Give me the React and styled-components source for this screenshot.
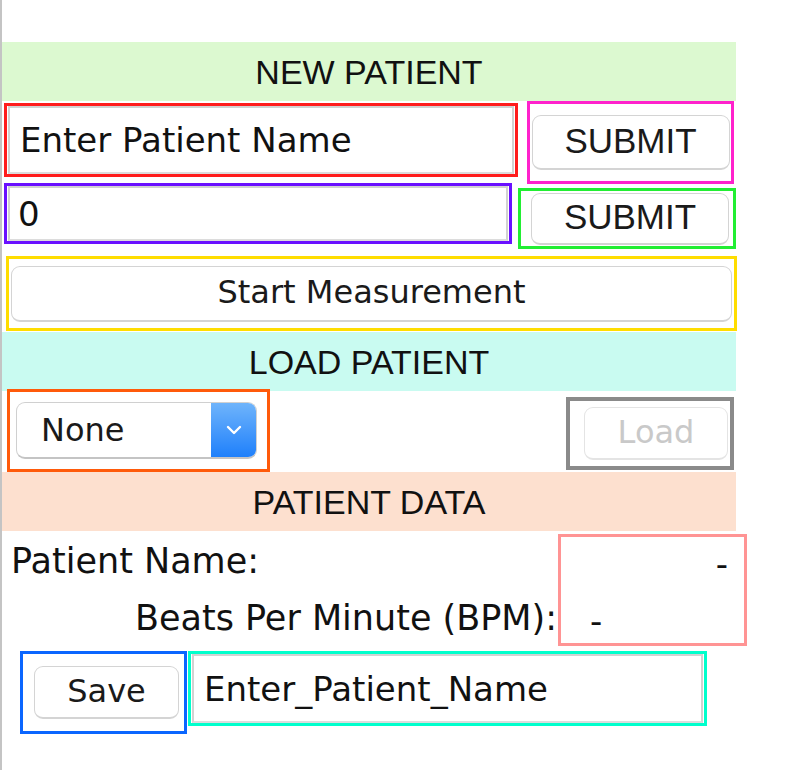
import styled, { createGlobalStyle } from "styled-components";

const GlobalStyle = createGlobalStyle`
  html, body {
    margin: 0;
    padding: 0;
    background: #ffffff;
  }
  * {
    box-sizing: border-box;
  }
`;

const Frame = styled.div`
  width: 798px;
  min-height: 770px;
  border-left: 2px solid #c4c4c4;
  padding-top: 42px;
  font-family: "DejaVu Sans", "Liberation Sans", sans-serif;
  color: #111;
  overflow: hidden;
`;

const Panel = styled.div`
  width: 734px;
  display: flex;
  flex-direction: column;
`;

const Band = styled.div`
  height: 59px;
  background: ${(p) => p.$bg};
  display: flex;
  align-items: center;
  justify-content: center;
  font-family: "Liberation Sans", Arial, sans-serif;
  font-size: 34px;
  color: #111;
  padding-top: 2px;
`;

const Row = styled.div`
  height: ${(p) => p.$h}px;
  display: flex;
  align-items: flex-start;
`;

const Outline = styled.div`
  flex: none;
  width: ${(p) => p.$w}px;
  height: ${(p) => p.$h}px;
  margin-left: ${(p) => p.$ml || 0}px;
  margin-top: ${(p) => p.$mt || 0}px;
  border: ${(p) => p.$bw || 3}px solid ${(p) => p.$color};
  display: flex;
  align-items: center;
  justify-content: ${(p) => p.$justify || "center"};
  padding-left: ${(p) => p.$pl || 0}px;
`;

const Entry = styled.div`
  width: 100%;
  height: 100%;
  margin: 1px;
  border: 2px solid #d2d2d2;
  border-bottom-color: #dcdcdc;
  background: #fff;
  display: flex;
  align-items: center;
  padding-left: ${(p) => p.$pl || 10}px;
  font-size: 34px;
  color: #111;
  white-space: nowrap;
`;

const Button = styled.div`
  width: ${(p) => p.$w}px;
  height: ${(p) => p.$h}px;
  flex: none;
  margin-left: ${(p) => p.$ml || 0}px;
  background: #fff;
  border: 1.5px solid #d4d4d4;
  border-bottom: 2.5px solid #c4c4c4;
  border-radius: 9px;
  display: flex;
  align-items: center;
  justify-content: center;
  font-family: ${(p) =>
    p.$caps ? '"Liberation Sans", Arial, sans-serif' : '"DejaVu Sans", sans-serif'};
  font-size: ${(p) => (p.$caps ? 35 : 32)}px;
  color: ${(p) => (p.$disabled ? "#c9c9c9" : "#1a1a1a")};
  border-color: ${(p) => (p.$disabled ? "#e4e4e4" : "#d4d4d4")};
  padding-bottom: 3px;
`;

const Select = styled.div`
  width: 241px;
  height: 57px;
  display: flex;
  border: 1.5px solid #d0d0d0;
  border-bottom: 2.5px solid #c4c4c4;
  border-radius: 9px;
  overflow: hidden;
  background: #fff;
`;

const SelectValue = styled.div`
  flex: 1;
  display: flex;
  align-items: center;
  padding-left: 24px;
  font-size: 32px;
  color: #1a1a1a;
`;

const SelectArrow = styled.div`
  width: 45px;
  background: linear-gradient(#6fb4fb, #1f80fb);
  display: flex;
  align-items: center;
  justify-content: center;
`;

const DataArea = styled.div`
  height: 115px;
  display: flex;
`;

const Labels = styled.div`
  flex: none;
  width: 556px;
  padding-top: 2px;
  display: flex;
  flex-direction: column;
`;

const Label = styled.div`
  height: 60px;
  display: flex;
  align-items: center;
  justify-content: ${(p) => (p.$right ? "flex-end" : "flex-start")};
  padding-left: ${(p) => (p.$right ? 0 : 9)}px;
  padding-right: ${(p) => (p.$right ? 1 : 0)}px;
  font-size: 35px;
  color: #111;
  white-space: nowrap;
`;

const ValueBox = styled.div`
  flex: none;
  width: 189px;
  height: 112px;
  margin-top: 3px;
  border: 3px solid #ff9494;
  display: flex;
  flex-direction: column;
`;

const Value = styled.div`
  height: 53px;
  display: flex;
  align-items: center;
  justify-content: ${(p) => (p.$right ? "flex-end" : "flex-start")};
  padding: ${(p) => (p.$right ? "0 16px 0 0" : "8px 0 0 29px")};
  font-size: 34px;
`;

const Chevron = () => (
  <svg width="16" height="10" viewBox="0 0 16 10">
    <path d="M2 2 L8 8 L14 2" fill="none" stroke="#fff" strokeWidth="2.4" strokeLinecap="round" strokeLinejoin="round" />
  </svg>
);

export default function App() {
  return (
    <Frame>
      <GlobalStyle />
      <Panel>
        <Band $bg="#dcf9d0">NEW PATIENT</Band>

        <Row $h={82}>
          <Outline $w={514} $h={74} $ml={2} $mt={2} $color="#ff1c1c">
            <Entry>Enter Patient Name</Entry>
          </Outline>
          <Outline $w={207} $h={83} $ml={9} $color="#ff22cc">
            <Button $w={198} $h={55} $caps>SUBMIT</Button>
          </Outline>
        </Row>

        <Row $h={66}>
          <Outline $w={508} $h={61} $ml={2} $mt={0} $color="#6a10ff">
            <Entry $pl={8}>0</Entry>
          </Outline>
          <Outline $w={218} $h={61} $ml={6} $mt={5} $color="#22ee33">
            <Button $w={198} $h={52} $ml={6} $caps>SUBMIT</Button>
          </Outline>
        </Row>

        <Row $h={83}>
          <Outline $w={731} $h={75} $ml={4} $mt={7} $color="#ffdd00">
            <Button $w={721} $h={56}>Start Measurement</Button>
          </Outline>
        </Row>

        <Band $bg="#c9fbf1">LOAD PATIENT</Band>

        <Row $h={81}>
          <Outline $w={263} $h={83} $ml={5} $mt={-2} $color="#ff5a0a" $justify="flex-start" $pl={6}>
            <Select>
              <SelectValue>None</SelectValue>
              <SelectArrow>
                <Chevron />
              </SelectArrow>
            </Select>
          </Outline>
          <Outline $w={168} $h={73} $ml={296} $mt={6} $bw={4} $color="#8a8a8a" $justify="flex-start" $pl={14}>
            <Button $w={144} $h={53} $disabled>Load</Button>
          </Outline>
        </Row>

        <Band $bg="#fde0cf">PATIENT DATA</Band>

        <DataArea>
          <Labels>
            <Label>Patient Name:</Label>
            <Label $right>Beats Per Minute (BPM):</Label>
          </Labels>
          <ValueBox>
            <Value $right>-</Value>
            <Value>-</Value>
          </ValueBox>
        </DataArea>

        <Row $h={90}>
          <Outline $w={167} $h={83} $ml={18} $mt={5} $color="#0a66ff">
            <Button $w={145} $h={53} $ml={6}>Save</Button>
          </Outline>
          <Outline $w={519} $h={75} $ml={1} $mt={5} $color="#00ffcc">
            <Entry>Enter_Patient_Name</Entry>
          </Outline>
        </Row>
      </Panel>
    </Frame>
  );
}
